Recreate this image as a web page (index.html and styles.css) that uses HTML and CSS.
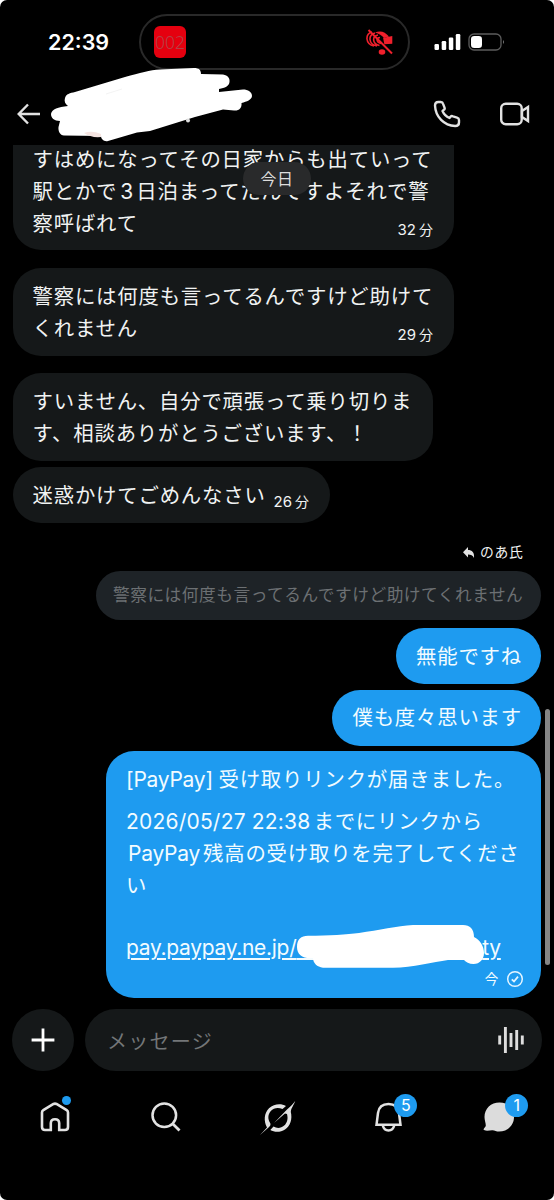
FILE: index.html
```html
<!DOCTYPE html>
<html lang="ja">
<head>
<meta charset="utf-8">
<title>メッセージ</title>
<link rel="stylesheet" href="styles.css">
</head>
<body>
<div class="phone">
  <header class="status">
    <div class="clock">22:39</div>
    <div class="island">
      <div class="artwork"><span>002</span></div>
      <svg class="muted" width="28" height="28" viewBox="0 0 28 28" fill="none" stroke="#f0202c" stroke-width="1.6">
        <path d="M8 18C-1 16 -1 6 6 4M11 18C2 16 2 7 9 5M13.500 17.500C6 16 6 8 12 7M15 15.500C10 14 10 10 14 9.500"/>
        <path d="M9 4.500Q17 1 23 8.500L18 10Q15 6 9 4.500Z" fill="#f0202c" stroke="none"/>
        <path d="M2.500 2L26 25.500" stroke-width="2"/>
        <path d="M18 10.500L25.500 9V15L19 15.500Z" fill="#f0202c"/>
        <ellipse cx="16" cy="24" rx="3.300" ry="2.800" fill="#f0202c" stroke="none"/>
      </svg>
    </div>
    <svg class="signal" width="27" height="18" viewBox="0 0 27 18" fill="#fff">
      <rect x="0.5" y="11" width="4.5" height="6" rx="1.2"/><rect x="7.7" y="8" width="4.5" height="9" rx="1.2"/><rect x="14.8" y="4.5" width="4.5" height="12.5" rx="1.2"/><rect x="21.8" y="1" width="4.5" height="16" rx="1.2"/>
    </svg>
    <svg class="battery" width="38" height="18" viewBox="0 0 38 18">
      <rect x="1" y="1" width="32" height="16" rx="5" fill="none" stroke="#5c5c5c" stroke-width="1.3"/>
      <rect x="3" y="3" width="11" height="12" rx="3.3" fill="#fff"/>
      <path d="M35 7Q37 9 35 11Z" fill="#777"/>
    </svg>
  </header>

  <div class="topbar">
    <svg class="back" width="24" height="22" viewBox="0 0 24 22" fill="none" stroke="#e2e2e2" stroke-width="2.4"><path d="M23 11H2M11 1.5L1.7 11L11 20.5"/></svg>
    <svg class="call" width="28" height="28" viewBox="0 0 28 28" fill="none" stroke="#e2e2e2" stroke-width="2.4" stroke-linejoin="round"><path d="M2 5.5C2 3.5 3.3 2 5.3 2H7.8C9 2 9.800 2.700 10.100 3.800L11.600 7.800C12 9 11.500 9.500 10.500 10L9.500 11C11 14.500 13 16.500 16.500 18L17.500 16.800C18.200 16 19 15.900 20 16.300L24 17.600C25.200 18 26 18.800 26 20V22.5C26 24.7 24.3 26 22.2 26C11 25.5 2.5 17 2 5.5Z"/></svg>
    <svg class="video" width="32" height="24" viewBox="0 0 32 24" fill="none" stroke="#e2e2e2" stroke-width="2.4"><rect x="2.2" y="1.700" width="20.500" height="20.500" rx="4.500"/><path d="M23 9L29 5V19L23 15Z"/></svg>
  </div>

  <main class="chat">
    <section class="msg in cut">
      <p>すはめになってその日家からも出ていって</p>
      <p>駅とかで<span class="num">3</span>日泊まってたんですよそれで警</p>
      <div class="last"><p>察呼ばれて</p><time>32<i>分</i></time></div>
    </section>
    <section class="msg in two">
      <p>警察には何度も言ってるんですけど助けて</p>
      <div class="last"><p>くれません</p><time>29<i>分</i></time></div>
    </section>
    <section class="msg in three">
      <p>すいません、自分で頑張って乗り切りま</p>
      <p>す、相談ありがとうございます、！</p>
    </section>
    <section class="msg in four">
      <div class="last"><p>迷惑かけてごめんなさい</p><time>26<i>分</i></time></div>
    </section>
    <div class="replying">
      <svg width="12" height="11" viewBox="0 0 12 11" fill="#e2e2e2"><path d="M5 0V3C9 3 11.7 5.5 11 11C9.7 8.5 8 7.6 5 7.6V10.5L0 5.2Z"/></svg>
      <span>のあ氏</span>
    </div>
    <div class="quote">警察には何度も言ってるんですけど助けてくれません</div>
    <section class="msg out"><p>無能ですね</p></section>
    <section class="msg out"><p>僕も度々思います</p></section>
    <section class="msg out pay">
      <p class="title"><span class="latin">[PayPay] </span>受け取りリンクが届きました。</p>
      <p><span class="date">2026/05/27 22:38</span>までにリンクから</p>
      <p class="name"><span class="latin">PayPay</span>残高の受け取りを完了してくださ</p>
      <p>い</p>
      <p class="link"><a>pay.paypay.ne.jp/<span class="gap">&nbsp;</span>ty</a></p>
      <div class="sent"><span>今</span>
        <svg width="18" height="18" viewBox="0 0 18 18" fill="none" stroke="#e4f5ff" stroke-width="1.5"><circle cx="9" cy="9" r="7.3"/><path d="M5.8 9.4L8 11.5L12 6.7" stroke-width="1.8"/></svg>
      </div>
    </section>
    <div class="today">今日</div>
  </main>

  <div class="composer">
    <div class="plus"><svg width="24" height="24" viewBox="0 0 24 24" stroke="#fff" stroke-width="2.8"><path d="M12 .6V23.4M.6 12H23.4"/></svg></div>
    <div class="field"><span>メッセージ</span>
      <svg width="28" height="28" viewBox="0 0 28 28" stroke="#dedede" stroke-width="2.9"><path d="M2.7 9.5V18.5M8.4 1V27M14 7V21M19.7 4V24M25.3 9.5V18.5"/></svg>
    </div>
  </div>

  <nav class="tabs">
    <div class="tab">
      <svg width="32" height="32" viewBox="0 0 32 32" fill="none" stroke="#e2e2e2" stroke-width="2.600"><path d="M3 11.5Q3 10 4.3 9.2L14.5 3Q16 2.2 17.5 3L27.7 9.2Q29 10 29 11.5V26Q29 29 26 29H20.2V22Q20 18.3 16 18.3T11.8 22V29H6Q3 29 3 26Z"/></svg>
      <span class="dot"></span>
    </div>
    <div class="tab">
      <svg width="32" height="32" viewBox="0 0 32 32" fill="none" stroke="#e2e2e2" stroke-width="2.500"><circle cx="14.3" cy="14.3" r="11.8"/><path d="M22.7 22.7L29.5 29.5" stroke-width="2.8"/></svg>
    </div>
    <div class="tab">
      <svg class="orbit" width="36" height="34" viewBox="0 0 36 34" fill="#e2e2e2"><path d="M0 34L7 26.500C3.500 20 4 12 9 7.200C14 2.800 21 2.300 26 5L22.500 8C18 6 13.500 7 10.800 10C7.500 13.700 7.800 18.500 10.300 22.300C10.800 24 10.200 25 8.800 26.200ZM14 22L27 8.500C30 6 33 3 35.200 0C33.500 5 31 7 30.800 11C32.500 18 30.500 25 25 28.500C20.500 31.500 14.500 31.500 10.300 29L13.500 25.500C17 27.700 21 27.300 24.200 24.600C27.500 21.500 28.200 17.400 27 13L25 12.500Z"/></svg>
    </div>
    <div class="tab">
      <svg width="32" height="32" viewBox="0 0 32 32" fill="none" stroke="#e2e2e2" stroke-width="2.5"><path d="M4.500 23.800L6 12Q7.200 3 16.500 3T27 12L28.500 23.800Z"/><path d="M10.800 24.500Q12 29.500 16.500 29.500T22.200 24.500"/></svg>
      <span class="badge">5</span>
    </div>
    <div class="tab">
      <svg width="32" height="32" viewBox="0 0 32 32" fill="#dcdcdc"><path d="M16.5 1.500C25.500 1.500 31 7.500 31 16S24.500 30.500 16 30.500C13.500 30.500 11.700 29.500 9.500 29.200C7.300 29 4 30.500 1 29C0 28.500 1 27.500 2.500 25.500C3.500 23.500 1.500 20 1.500 16C1.500 7.500 8 1.500 16.500 1.500Z"/></svg>
      <span class="badge">1</span>
    </div>
  </nav>

  <svg class="marks" width="554" height="1200" viewBox="0 0 554 1200" fill="#fff">
    <path d="M65 98C66 94 70 93 75 92L125 77C140 73 150 70 160 69.500L194 68C199 68 201 70 201 74L223 74.500C228 75.500 230 78 229.500 82C229 86 225 88 219 89L219 92L243 89.500C248 89.500 252 92 252 96C251.500 100 247 101.500 241.500 103C242 108 239 111 234 110.500L223 109.500L195 117L150 131L137 132.500L108 141C104 142 101 139 101 136L64 135.500C60 135.500 58 131 58.500 127L60 121C54 121 51 118 51 114C52 109 58 107 68 106C65 104 64 101 65 98Z"/>
    <circle cx="188" cy="120.500" r="2" fill="#ddd"/>
    <path d="M84 133Q92 130 101 134V137Q91 138 84 133Z" fill="#f5e4e1"/>
    <path d="M106 94L122 89" stroke="#eee" stroke-width=".7"/>
    <path d="M297 947C297 939 301 935.700 308 935.700C329 935.700 347 934.500 359 933C379 930 397 926 413 925H463C470 925 474 929 474 937C480 940 484 946 484 953C484 959 480 964 473.500 964C469 964 466 962 464 960H448C433 962 413 967.500 393 967.700H323C317 967 313 963 313 958C303 959 297 955 297 947Z"/>
  </svg>
  <div class="scrollbar"></div>
</div>
</body>
</html>
```
FILE: styles.css
```css
* { box-sizing: border-box; }
body { margin: 0; background: #fff; }
p { margin: 0; }
i { font-style: normal; }
svg { display: block; flex: none; }
.phone {
  position: relative;
  width: 554px;
  height: 1200px;
  display: flex;
  flex-direction: column;
  overflow: hidden;
  background: #000;
  border-radius: 7px;
  color: #f1f3f3;
  font-family: Inter, "Noto Sans CJK JP", sans-serif;
}
.status { height: 83px; flex: none; display: flex; align-items: center; padding-left: 48px; }
.clock { width: 91px; font-size: 21.5px; font-weight: 600; letter-spacing: 0; color: #fff; }
.island {
  width: 271px;
  height: 56px;
  border: 2px solid #292929;
  border-radius: 28px;
  display: flex;
  align-items: center;
  justify-content: space-between;
  padding: 0 14px 0 13px;
}
.artwork { width: 32px; height: 32px; border-radius: 6px; background: #e5000f; color: #b54046; text-align: center; font: 300 17.5px/33px "Noto Sans", sans-serif; }
.signal { margin-left: 24px; }
.battery { margin-left: 7px; }
.topbar { height: 62px; flex: none; display: flex; align-items: center; padding-left: 17px; }
.call { margin-left: 392px; }
.video { margin-left: 37.5px; }

.chat {
  position: relative;
  height: 853px;
  flex: none;
  overflow: hidden;
  display: flex;
  flex-direction: column;
  align-items: flex-start;
  padding: 0 13px;
  font-size: 20.4px;
  line-height: 32px;
  letter-spacing: .8px;
}
.msg { padding: 12.5px 20px 11px; border-radius: 28px; flex: none; }
.msg p { white-space: nowrap; }
.in { background: #151819; }
.in > p, .last > p { margin-left: -.5px; }
.last { display: flex; justify-content: space-between; }
.cut { width: 441px; height: 105px; padding-top: 0; margin-bottom: 18px; border-radius: 0 0 28px 28px; }
.cut p { position: relative; top: -1.5px; }
.num { margin: 0 3px 0 3px; letter-spacing: 0; font-size: 21px; }
.two { width: 441px; height: 88px; margin-bottom: 17px; }
.three { width: 420px; height: 88px; margin-bottom: 6px; }
.four { width: 317px; height: 56px; }
time { font-size: 15px; line-height: 22px; letter-spacing: 0; align-self: flex-end; white-space: nowrap; margin-right: 1px; }
time i { font-size: 14px; margin-left: 3px; }
.two time { margin-bottom: -1px; }
.four time { margin-bottom: -1px; }
.replying { align-self: flex-end; display: flex; align-items: center; gap: 5px; height: 24px; margin: 17px 17.5px 7px 0; font-size: 13.8px; letter-spacing: .7px; }
.quote {
  align-self: flex-end;
  width: 445px;
  height: 49px;
  padding-left: 17px;
  margin-bottom: 8px;
  border-radius: 25px;
  background: #1e2327;
  color: #6c7073;
  font-size: 16.7px;
  line-height: 49px;
  letter-spacing: .52px;
  white-space: nowrap;
}
.out { align-self: flex-end; height: 56px; margin-bottom: 5.5px; padding-right: 19px; background: #1e9bf0; color: #f2fbff; }
.pay { width: 435px; height: 247px; margin-bottom: 0; }
.latin { letter-spacing: -.25px; font-size: 21px; }
.title { margin: 0 0 10px; }
.date { letter-spacing: .2px; font-size: 21px; margin-right: 3px; }
.name { padding-left: 2px; }
.name .latin { margin-right: 3px; }
.link { margin-top: 30.5px; font-size: 21px; letter-spacing: -.3px; }
.link a { text-decoration: underline; text-decoration-thickness: 1.5px; text-underline-offset: 3px; }
.gap { letter-spacing: 180px; }
.sent { display: flex; justify-content: flex-end; align-items: center; gap: 7px; height: 30px; margin-right: -2px; font-size: 13.5px; }
.today {
  position: absolute;
  left: 243px;
  top: 17px;
  width: 68px;
  height: 33px;
  border-radius: 17px;
  background: #292a2b;
  color: #ddd;
  text-align: center;
  font-size: 16px;
  line-height: 34px;
  letter-spacing: .5px;
}

.composer { flex: none; display: flex; gap: 11px; padding: 11px 12px 0; height: 74px; }
.plus { width: 62px; height: 62px; border-radius: 50%; background: #151819; display: grid; place-items: center; }
.field { width: 458px; height: 62px; border-radius: 31px; background: #151819; display: flex; align-items: center; justify-content: space-between; padding: 0 17px 0 22px; color: #737678; font-size: 20px; letter-spacing: 1.3px; }
.tabs { flex: none; display: flex; height: 90px; }
.tab { position: relative; width: 111px; padding-top: 29px; display: flex; justify-content: center; align-items: flex-start; }
.orbit { margin-left: 3px; }
.dot { position: absolute; left: 62px; top: 24px; width: 9px; height: 9px; border-radius: 50%; background: #1e9bf0; }
.badge { position: absolute; left: 62px; top: 22px; width: 23px; height: 23px; border-radius: 50%; background: #1e9bf0; color: #fff; text-align: center; font-size: 16px; line-height: 23px; }
.marks { position: absolute; left: 0; top: 0; pointer-events: none; }
.scrollbar { position: absolute; left: 545px; top: 709px; width: 5px; height: 256px; border-radius: 3px; background: #858585; }
```
